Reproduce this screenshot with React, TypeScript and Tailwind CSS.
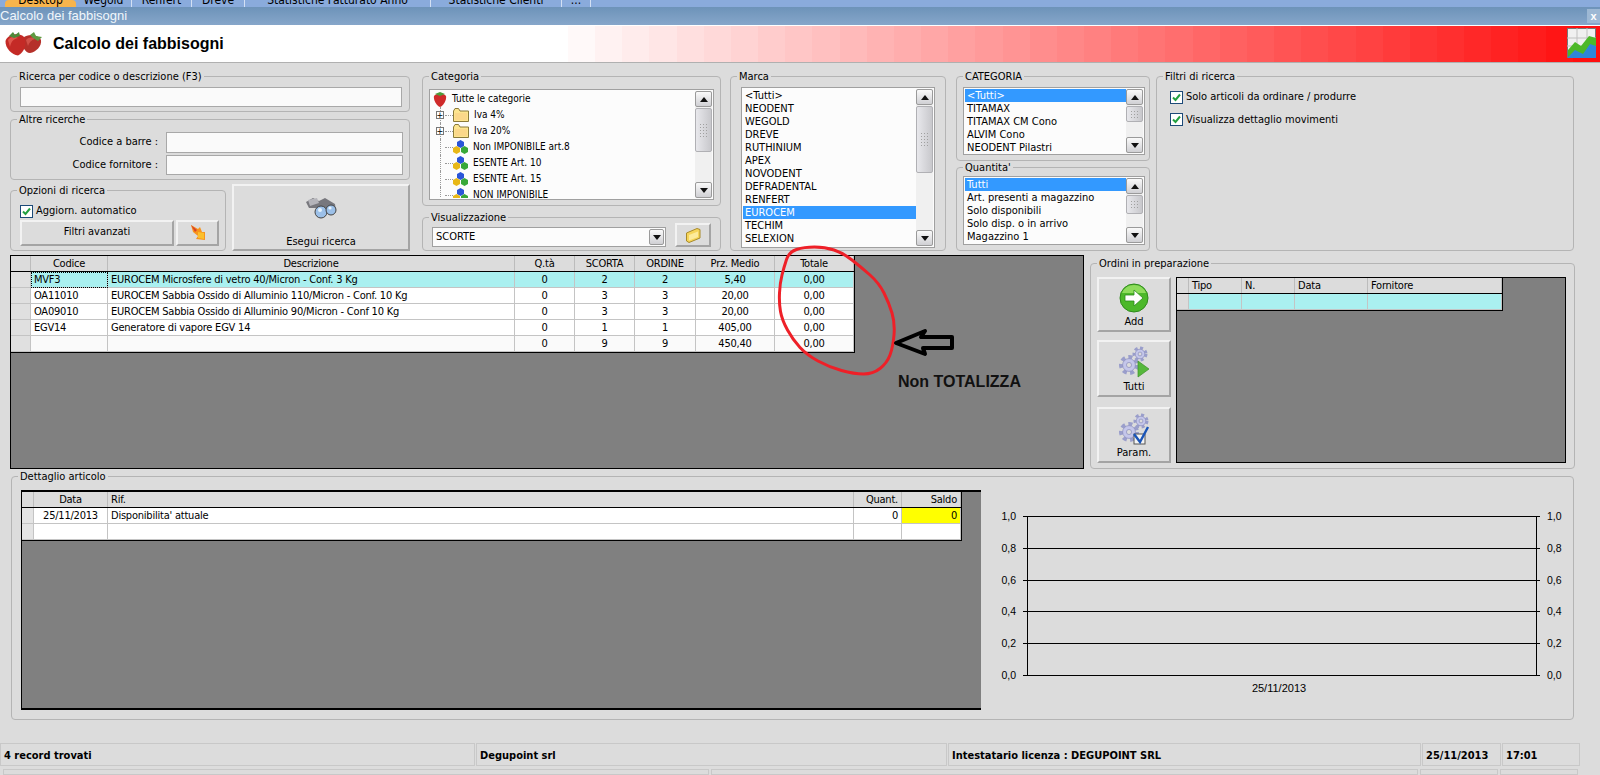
import type { ReactNode } from "react";

const raised = "border-2 border-t-[#f2f2f2] border-l-[#f2f2f2] border-b-[#a4a4a4] border-r-[#a4a4a4] bg-[#dcdcdc]";

const GroupBox = ({ title, className, children }: { title: string; className: string; children?: ReactNode }) => (
    <div className={`relative rounded-[4px] border border-[#b4b4b4] ${className}`}>
        <span className="absolute -top-[7px] left-[6px] bg-[#dcdcdc] px-[2px] text-[11px] leading-[14px] text-black whitespace-nowrap">{title}</span>
        {children}
    </div>
);

const Check = () => (
    <span className="flex h-[13px] w-[13px] shrink-0 items-center justify-center border border-[#1c4a78] bg-white">
        <svg width="9" height="9" viewBox="0 0 9 9">
            <path d="M1 4.5 L3.5 7 L8 1.5" fill="none" stroke="#22a040" strokeWidth="2" />
        </svg>
    </span>
);

const Triangle = ({ up }: { up?: boolean }) => (
    <svg width="8" height="5" viewBox="0 0 8 5">
        <path d={up ? "M4 0 L8 5 L0 5 Z" : "M0 0 L8 0 L4 5 Z"} fill="#111" />
    </svg>
);

const ScrollButton = ({ up }: { up?: boolean }) => (
    <div className="flex h-[16px] w-[17px] shrink-0 items-center justify-center rounded-[2px] border border-[#9a9a9a] bg-gradient-to-b from-[#fafafa] to-[#d0d0d4]">
        <Triangle up={up} />
    </div>
);

const ScrollBar = ({ thumb }: { thumb: number }) => (
    <div className="flex w-[17px] shrink-0 flex-col bg-[#f0f0f0]">
        <ScrollButton up />
        <div
            className="mt-[1px] flex w-[17px] shrink-0 items-center justify-center overflow-hidden rounded-[2px] border border-[#b0b0b4] bg-gradient-to-r from-[#e8e8ec] to-[#c8c8cc]"
            style={{ height: thumb }}
        >
            <div className="grid grid-cols-3 gap-[2px]">
                {Array.from({ length: thumb > 30 ? 15 : 9 }, (_, i) => (
                    <span key={i} className="h-[1px] w-[1px] bg-[#a0a0a0]" />
                ))}
            </div>
        </div>
        <div className="flex-1" />
        <ScrollButton />
    </div>
);

const ListBox = ({ items, selected, thumb, className }: { items: string[]; selected: number; thumb: number; className: string }) => (
    <div className={`flex justify-between border border-[#a0a0a0] bg-[#fcfcfc] p-[1px] ${className}`}>
        <div className="min-w-0 flex-1 overflow-hidden">
            {items.map((item, i) => (
                <div key={item} className={`h-[13px] whitespace-nowrap pl-[2px] text-[11px] leading-[13px] ${i === selected ? "bg-[#3399ff] text-white" : "text-black"}`}>
                    {item}
                </div>
            ))}
        </div>
        <ScrollBar thumb={thumb} />
    </div>
);

const Berry = ({ size = 14 }: { size?: number }) => (
    <svg width={size} height={size + 2} viewBox="0 0 14 16">
        <path d="M1 5 C3 2 11 2 13 5 C14 9 10 15 7 16 C4 15 0 9 1 5 Z" fill="#cf2a2a" />
        <path d="M2 3 L7 1 L12 3 L7 5 Z" fill="#4c9a3a" />
    </svg>
);

const Strawberries = () => (
    <svg width="38" height="24" viewBox="0 0 38 24" className="shrink-0">
        <path d="M18 6 C24 1 33 3 36 8 C37 14 31 20 25 21 C20 21 16 14 18 6 Z" fill="#b5302a" />
        <path d="M0.5 9 C2 2 15 0 19 5 C22 11 20 20 13 23.5 C7 23 0 16 0.5 9 Z" fill="#c42a26" />
        <path d="M3 8 C6 4 10 4 13 6 C8 7 6 10 5 15 Z" fill="#e0564c" />
        <path d="M21 8 C24 5 28 5 30 7 C26 8 24 11 23 14 Z" fill="#d25048" />
        <path d="M4 4 L8 0 L10 3 L14 0 L15 4 L9 6 Z" fill="#4d8a3a" />
        <path d="M25 3 L29 0 L31 4 L37 5 L33 9 L28 6 Z" fill="#5f9a42" />
    </svg>
);

const Folder = () => (
    <svg width="16" height="14" viewBox="0 0 16 14" className="shrink-0">
        <path d="M0.5 3 L0.5 13.5 L15.5 13.5 L15.5 3 L7 3 L5.5 0.5 L2 0.5 Z" fill="#fde58e" stroke="#8a7a3a" />
        <path d="M2 5 H14 V12 H2 Z" fill="#fbd88a" />
    </svg>
);

const OpenFolder = () => (
    <svg width="15" height="15" viewBox="0 0 15 15" className="shrink-0">
        <path d="M0.5 5 L11 0.5 L14 1.5 L14 10 L3 14.5 L0.5 13 Z" fill="#f6d55a" stroke="#a88a2a" />
        <path d="M3 7 L12 3.5 V9 L3 12.5 Z" fill="#fdeb9c" />
    </svg>
);

const Cubes = () => (
    <svg width="15" height="14" viewBox="0 0 15 14" className="shrink-0">
        <path d="M4 2 L7.5 0 L11 2 V6 L7.5 8 L4 6 Z" fill="#2a55d8" />
        <path d="M0 8 L3.5 6 L7 8 V12 L3.5 14 L0 12 Z" fill="#e8b818" />
        <path d="M8 8 L11.5 6 L15 8 V12 L11.5 14 L8 12 Z" fill="#38a838" />
    </svg>
);

const treeRows: { label: string; folder?: boolean }[] = [
    { label: "Iva 4%", folder: true },
    { label: "Iva 20%", folder: true },
    { label: "Non IMPONIBILE art.8" },
    { label: "ESENTE Art. 10" },
    { label: "ESENTE Art. 15" },
    { label: "NON IMPONIBILE" },
];

const CategoryTree = () => (
    <div className="flex h-[111px] w-[285px] justify-between border border-[#a0a0a0] bg-[#fcfcfc] py-[1px] pr-[1px]">
        <div className="min-w-0 flex-1 overflow-hidden pl-[3px] text-[10px] leading-[16px] text-black">
            <div className="flex h-[16px] items-center gap-[5px]">
                <Berry />
                <span>Tutte le categorie</span>
            </div>
            {treeRows.map(row => (
                <div key={row.label} className="flex h-[16px] items-center">
                    <span className="relative flex h-[16px] w-[20px] shrink-0 items-center justify-end">
                        <span className="absolute left-[7px] top-0 h-[16px] border-l border-dotted border-[#999]" />
                        {row.folder && (
                            <span className="absolute left-[3px] top-[4px] flex h-[8px] w-[8px] items-center justify-center border border-[#777] bg-white text-[9px] leading-[6px]">+</span>
                        )}
                        <span className="w-[8px] border-t border-dotted border-[#999]" />
                    </span>
                    {row.folder ? <Folder /> : <Cubes />}
                    <span className="ml-[5px] whitespace-nowrap">{row.label}</span>
                </div>
            ))}
        </div>
        <ScrollBar thumb={44} />
    </div>
);

type Column = { label: string; width: number; head?: string; cell?: string };

const DataGrid = ({ columns, rows, rowClass, cellClass }: {
    columns: Column[];
    rows: string[][];
    rowClass?: (row: number) => string;
    cellClass?: (row: number, col: number) => string;
}) => (
    <div className="w-fit border-b border-r border-black text-[11px] leading-[15px] tracking-[-0.22px] text-black">
        <div className="flex h-[16px] border-b border-black bg-[#dcdcdc]">
            {columns.map((col, i) => (
                <div key={i} className={`h-[15px] shrink-0 truncate border-r border-[#bcbcbc] px-[3px] ${col.head ?? "text-center"}`} style={{ width: col.width }}>
                    {col.label}
                </div>
            ))}
        </div>
        {rows.map((row, r) => (
            <div key={r} className={`flex h-[16px] ${rowClass ? rowClass(r) : "bg-white"}`}>
                {row.map((text, c) => (
                    <div
                        key={c}
                        className={`h-[16px] shrink-0 truncate border-b border-r border-[#c4c4c4] px-[3px] ${columns[c].cell ?? ""} ${cellClass ? cellClass(r, c) : ""}`}
                        style={{ width: columns[c].width }}
                    >
                        {text}
                    </div>
                ))}
            </div>
        ))}
    </div>
);

const mainColumns: Column[] = [
    { label: "", width: 20 },
    { label: "Codice", width: 77 },
    { label: "Descrizione", width: 407 },
    { label: "Q.tà", width: 60, cell: "text-center" },
    { label: "SCORTA", width: 60, cell: "text-center" },
    { label: "ORDINE", width: 61, cell: "text-center" },
    { label: "Prz. Medio", width: 79, cell: "text-center" },
    { label: "Totale", width: 79, cell: "text-center" },
];

const mainRows = [
    ["", "MVF3", "EUROCEM Microsfere di vetro 40/Micron - Conf. 3 Kg", "0", "2", "2", "5,40", "0,00"],
    ["", "OA11010", "EUROCEM Sabbia Ossido di Alluminio 110/Micron - Conf. 10 Kg", "0", "3", "3", "20,00", "0,00"],
    ["", "OA09010", "EUROCEM Sabbia Ossido di Alluminio 90/Micron - Conf 10 Kg", "0", "3", "3", "20,00", "0,00"],
    ["", "EGV14", "Generatore di vapore EGV 14", "0", "1", "1", "405,00", "0,00"],
    ["", "", "", "0", "9", "9", "450,40", "0,00"],
];

const orderColumns: Column[] = [
    { label: "", width: 12 },
    { label: "Tipo", width: 53, head: "text-left" },
    { label: "N.", width: 53, head: "text-left" },
    { label: "Data", width: 73, head: "text-left" },
    { label: "Fornitore", width: 134, head: "text-left" },
];

const detailColumns: Column[] = [
    { label: "", width: 12 },
    { label: "Data", width: 74, cell: "text-center" },
    { label: "Rif.", width: 746, head: "text-left" },
    { label: "Quant.", width: 48, head: "text-right", cell: "text-right" },
    { label: "Saldo", width: 59, head: "text-right", cell: "text-right" },
];

const Gear = ({ x, y, r }: { x: number; y: number; r: number }) => (
    <g>
        <circle cx={x} cy={y} r={r} fill="none" stroke="#9a9ecb" strokeWidth={r * 0.5} strokeDasharray={`${r * 0.5} ${r * 0.42}`} />
        <circle cx={x} cy={y} r={r * 0.8} fill="#c4c6ea" stroke="#8a8dbc" strokeWidth="0.7" />
        <circle cx={x} cy={y} r={r * 0.32} fill="#dcdcdc" stroke="#8a8dbc" strokeWidth="0.7" />
    </g>
);

const AddIcon = () => (
    <svg width="30" height="30" viewBox="0 0 30 30">
        <circle cx="15" cy="15" r="14" fill="#4cb82a" stroke="#2f8a1c" />
        <path d="M3 10 A13 13 0 0 1 27 10 Z" fill="#8edc5c" />
        <path d="M6 12 H15 V7 L24 15 L15 23 V18 H6 Z" fill="#fff" stroke="#2c8a1c" strokeWidth="0.8" />
    </svg>
);

const GearPlayIcon = () => (
    <svg width="32" height="32" viewBox="0 0 32 32">
        <Gear x={22} y={8} r={6} />
        <Gear x={11} y={19} r={8} />
        <path d="M20 15 L31 23 L20 31 Z" fill="#56b83c" stroke="#3d8f2a" strokeWidth="0.7" />
    </svg>
);

const GearCheckIcon = () => (
    <svg width="32" height="32" viewBox="0 0 32 32">
        <Gear x={23} y={8} r={6} />
        <Gear x={11} y={19} r={8} />
        <rect x="16" y="21" width="11" height="10" fill="#f4f4f4" stroke="#555" />
        <path d="M16 21 L22 29 L30 14" fill="none" stroke="#1a55b8" strokeWidth="2.4" />
    </svg>
);

const SideButton = ({ label, className, children }: { label: string; className: string; children: ReactNode }) => (
    <div className={`flex w-[74px] flex-col items-center justify-between pb-[1px] pt-[4px] text-[11px] leading-[14px] text-black ${raised} ${className}`}>
        {children}
        <span>{label}</span>
    </div>
);

const Binoculars = () => (
    <svg width="32" height="22" viewBox="0 0 32 22">
        <path d="M1 5 L8 1 L14 4 L20 1 L30 7 L31 14 L25 11 L17 11 L10 11 L4 11 Z" fill="#77777d" />
        <path d="M3 3 L12 1 L14 6 L5 9 Z" fill="#b4b4ba" />
        <circle cx="16" cy="15" r="6" fill="#9cc0e8" stroke="#444" />
        <circle cx="26" cy="13" r="5" fill="#9cc0e8" stroke="#444" />
        <circle cx="15" cy="13" r="2" fill="#e6f2fc" />
        <circle cx="25" cy="11" r="1.6" fill="#e6f2fc" />
    </svg>
);

const FlameArrow = () => (
    <svg width="16" height="16" viewBox="0 0 16 16">
        <path d="M1 0 L8 4 L10 2 L12 7 L15 7 L15 15 L6 14 L8 11 L3 7 Z" fill="#f7941d" />
        <path d="M1 0 L7 5 L5 7 Z" fill="#d8402a" />
        <path d="M8 7 L14 8 L14 14 L8 13 Z" fill="#fbc02d" />
    </svg>
);

const ChartIcon = () => (
    <svg width="30" height="31" viewBox="0 0 30 31" className="shrink-0">
        <rect x="0.5" y="0.5" width="28" height="29" fill="#f0f0f0" stroke="#777" />
        <path d="M0 10 H29 M0 18 H29 M10 0 V30 M20 0 V30" stroke="#c0c0c0" />
        <path d="M1 22 L8 14 L14 18 L22 8 L29 10 V30 H1 Z" fill="#4cb828" />
        <path d="M1 29 L8 22 L16 26 L23 16 L29 18 V30 H1 Z" fill="#2f86d8" />
    </svg>
);

// bande del gradiente nell'intestazione
const bands = Array.from({ length: 38 }, (_, i) => {
    const t = (i + 1) / 38;
    const c = Math.round(255 - t * 240);
    return `rgb(255,${c},${c})`;
});

const smooth = (pts: number[][]) => {
    let d = "";
    pts.forEach((p, i) => {
        const next = pts[(i + 1) % pts.length];
        const mid = [(p[0] + next[0]) / 2, (p[1] + next[1]) / 2];
        d += i === 0 ? `M${mid[0]} ${mid[1]} ` : `Q${p[0]} ${p[1]} ${mid[0]} ${mid[1]} `;
    });
    const first = pts[0];
    const second = pts[1];
    return d + `Q${first[0]} ${first[1]} ${(first[0] + second[0]) / 2} ${(first[1] + second[1]) / 2}`;
};

const ring = [[789, 252], [804, 247], [825, 247], [843, 253], [861, 267], [879, 283], [889, 303], [895, 323], [893, 347], [887, 363], [873, 374], [854, 374], [829, 367], [807, 355], [793, 340], [782, 320], [779, 303], [780, 283], [784, 267]];

const tabs = [
    { label: "Wegold", width: 56 },
    { label: "Renfert", width: 60 },
    { label: "Dreve", width: 53 },
    { label: "Statistiche Fatturato Anno", width: 186 },
    { label: "Statistiche Clienti", width: 131 },
    { label: "...", width: 29 },
];

const levels = ["1,0", "0,8", "0,6", "0,4", "0,2", "0,0"];
const levelY = [26, 58, 90, 121, 153, 185];

const StatusCell = ({ className, children }: { className: string; children?: ReactNode }) => (
    <div className={`shrink-0 truncate border border-[#c8c8c8] pl-[3px] font-bold ${className}`}>{children}</div>
);

export default function App() {
    return (
        <div className="relative flex h-[775px] w-[1600px] flex-col overflow-hidden bg-[#dcdcdc] font-['DejaVu_Sans_Condensed','Liberation_Sans',sans-serif] text-[11px] text-black">
            {/* Tabs, tagliate dal bordo */}
            <div className="flex h-[7px] shrink-0 overflow-hidden bg-[#8aabdc] pl-[5px] text-[12px] leading-[14px]">
                <div className="h-[7px] w-[71px] rounded-t bg-[#f8b44c] text-center">
                    <div className="-mt-[7px]">Desktop</div>
                </div>
                {tabs.map(tab => (
                    <div key={tab.label} className="h-[7px] shrink-0 border-r border-[#d4e0f4] text-center" style={{ width: tab.width }}>
                        <div className="-mt-[7px] whitespace-nowrap">{tab.label}</div>
                    </div>
                ))}
            </div>

            {/* Barra titolo */}
            <div className="flex h-[18px] shrink-0 items-center justify-between bg-gradient-to-b from-[#6d93b9] to-[#86a6ca] font-['Liberation_Sans',sans-serif] text-[13px] text-[#f0f6fb]">
                <span>Calcolo dei fabbisogni</span>
                <span className="flex h-[14px] w-[13px] items-center justify-center bg-[#9db8d4] text-[11px] font-bold text-white">x</span>
            </div>

            {/* Intestazione */}
            <div className="flex h-[38px] shrink-0 items-center border-y border-[#b0b0b0] border-t-white bg-white">
                <div className="ml-[5px]"><Strawberries /></div>
                <h1 className="ml-[10px] w-[515px] font-['Liberation_Sans',sans-serif] text-[16px] font-bold">Calcolo dei fabbisogni</h1>
                <div className="flex h-full flex-1 items-stretch">
                    {bands.map(color => (
                        <div key={color} className="flex-1" style={{ background: color }} />
                    ))}
                </div>
                <div className="absolute right-[3px] top-[28px]"><ChartIcon /></div>
            </div>

            {/* Filtri */}
            <div className="mt-[13px] flex h-[175px] shrink-0 pl-[10px]">
                <div className="w-[400px]">
                    <GroupBox title="Ricerca per codice o descrizione (F3)" className="h-[36px] px-[9px] pt-[10px]">
                        <div className="h-[20px] w-[382px] border border-[#a8a8a8] bg-[#fafafa]" />
                    </GroupBox>
                    <GroupBox title="Altre ricerche" className="mt-[7px] flex h-[61px] flex-col gap-[2px] pl-[2px] pt-[12px]">
                        <div className="flex items-center">
                            <span className="w-[145px] text-right">Codice a barre :</span>
                            <div className="ml-[8px] h-[21px] w-[237px] border border-[#a8a8a8] bg-[#fafafa]" />
                        </div>
                        <div className="flex items-center">
                            <span className="w-[145px] text-right">Codice fornitore :</span>
                            <div className="ml-[8px] h-[20px] w-[237px] border border-[#a8a8a8] bg-[#fafafa]" />
                        </div>
                    </GroupBox>
                    <div className="mt-[4px] flex h-[67px] items-end justify-between">
                        <GroupBox title="Opzioni di ricerca" className="h-[61px] w-[216px] pl-[9px] pt-[12px]">
                            <div className="flex items-center gap-[3px]">
                                <Check />
                                <span>Aggiorn. automatico</span>
                            </div>
                            <div className="flex gap-[2px]">
                                <div className={`flex h-[26px] w-[154px] items-center justify-center ${raised}`}>Filtri avanzati</div>
                                <div className={`flex h-[26px] w-[43px] items-center justify-center ${raised}`}><FlameArrow /></div>
                            </div>
                        </GroupBox>
                        <div className={`flex h-[67px] w-[178px] flex-col items-center justify-between pt-[11px] leading-[14px] ${raised}`}>
                            <Binoculars />
                            <span>Esegui ricerca</span>
                        </div>
                    </div>
                </div>

                <div className="ml-[12px] w-[299px]">
                    <GroupBox title="Categoria" className="h-[130px] pl-[6px] pt-[12px]">
                        <CategoryTree />
                    </GroupBox>
                    <GroupBox title="Visualizzazione" className="mt-[11px] flex h-[34px] items-start pl-[9px] pt-[9px]">
                        <div className="flex h-[20px] w-[234px] items-center justify-between border border-[#a0a0a0] bg-[#fcfcfc] pl-[3px] pr-[1px] text-[11px]">
                            <span>SCORTE</span>
                            <div className="flex h-[16px] w-[15px] items-center justify-center rounded-[2px] border border-[#9a9a9a] bg-gradient-to-b from-[#fafafa] to-[#d0d0d4]"><Triangle /></div>
                        </div>
                        <div className={`ml-[9px] -mt-[4px] flex h-[24px] w-[36px] items-center justify-center ${raised}`}><OpenFolder /></div>
                    </GroupBox>
                </div>

                <GroupBox title="Marca" className="ml-[9px] h-[175px] w-[216px] pl-[10px] pt-[10px]">
                    <ListBox
                        className="h-[161px] w-[194px]"
                        selected={9}
                        thumb={67}
                        items={["<Tutti>", "NEODENT", "WEGOLD", "DREVE", "RUTHINIUM", "APEX", "NOVODENT", "DEFRADENTAL", "RENFERT", "EUROCEM", "TECHIM", "SELEXION"]}
                    />
                </GroupBox>

                <div className="ml-[10px] w-[194px]">
                    <GroupBox title="CATEGORIA" className="h-[85px] pl-[6px] pt-[10px]">
                        <ListBox
                            className="h-[68px] w-[182px]"
                            selected={0}
                            thumb={16}
                            items={["<Tutti>", "TITAMAX", "TITAMAX CM Cono", "ALVIM Cono", "NEODENT Pilastri"]}
                        />
                    </GroupBox>
                    <GroupBox title="Quantita'" className="mt-[6px] h-[84px] pl-[6px] pt-[8px]">
                        <ListBox
                            className="h-[69px] w-[182px]"
                            selected={0}
                            thumb={19}
                            items={["Tutti", "Art. presenti a magazzino", "Solo disponibili", "Solo disp. o in arrivo", "Magazzino 1"]}
                        />
                    </GroupBox>
                </div>

                <GroupBox title="Filtri di ricerca" className="ml-[6px] flex h-[175px] w-[418px] flex-col gap-[6px] pl-[13px] pt-[12px]">
                    <div className="flex items-center gap-[3px]">
                        <Check />
                        <span>Solo articoli da ordinare / produrre</span>
                    </div>
                    <div className="flex items-center gap-[3px]">
                        <Check />
                        <span>Visualizza dettaglio movimenti</span>
                    </div>
                </GroupBox>
            </div>

            {/* Griglia principale e ordini */}
            <div className="mt-[4px] flex h-[214px] shrink-0 pl-[10px]">
                <div className="h-[214px] w-[1074px] border border-black bg-[#808080]">
                    <DataGrid
                        columns={mainColumns}
                        rows={mainRows}
                        rowClass={r => (r === 0 ? "bg-[#aaf0f0]" : r === 4 ? "bg-[#fafafa]" : "bg-white")}
                        cellClass={(r, c) => {
                            if (c === 0) return "bg-[#e0e0e0]";
                            if (r === 0 && c === 1) return "outline-1 -outline-offset-1 outline-dotted outline-black";
                            return "";
                        }}
                    />
                </div>
                <GroupBox title="Ordini in preparazione" className="ml-[6px] mt-[8px] flex h-[206px] w-[485px] pl-[6px] pt-[13px]">
                    <div className="flex flex-col">
                        <SideButton label="Add" className="h-[55px]"><AddIcon /></SideButton>
                        <SideButton label="Tutti" className="mt-[8px] h-[57px]"><GearPlayIcon /></SideButton>
                        <SideButton label="Param." className="mt-[10px] h-[56px]"><GearCheckIcon /></SideButton>
                    </div>
                    <div className="ml-[5px] h-[186px] w-[390px] border border-black bg-[#808080]">
                        <DataGrid
                            columns={orderColumns}
                            rows={[["", "", "", "", ""]]}
                            rowClass={() => "bg-[#aaf0f0]"}
                            cellClass={(_, c) => (c === 0 ? "bg-[#dcdcdc]" : "")}
                        />
                    </div>
                </GroupBox>
            </div>

            {/* Dettaglio articolo */}
            <GroupBox title="Dettaglio articolo" className="ml-[11px] mt-[7px] flex h-[244px] w-[1563px] shrink-0 pl-[9px] pt-[13px]">
                <div className="h-[220px] w-[960px] shrink-0 border-y-2 border-l border-black bg-[#808080]">
                    <DataGrid
                        columns={detailColumns}
                        rows={[
                            ["", "25/11/2013", "Disponibilita' attuale", "0", "0"],
                            ["", "", "", "", ""],
                        ]}
                        cellClass={(r, c) => (c === 0 ? "bg-[#e4e4e4]" : r === 0 && c === 4 ? "bg-[#ffff00]" : "")}
                    />
                </div>
                <svg width="585" height="220" viewBox="0 0 585 220" className="ml-[5px] shrink-0 font-['Liberation_Sans',sans-serif]">
                    {levelY.map((y, i) => (
                        <g key={y}>
                            <path d={`M37 ${y} H554`} stroke="#000" strokeWidth="1" shapeRendering="crispEdges" />
                            <text x="30" y={y + 4} fontSize="10.5" textAnchor="end" fill="#000">{levels[i]}</text>
                            <text x="561" y={y + 4} fontSize="10.5" fill="#000">{levels[i]}</text>
                        </g>
                    ))}
                    <path d="M41 26 V185 M550 26 V185" stroke="#000" shapeRendering="crispEdges" />
                    <text x="293" y="202" fontSize="11" textAnchor="middle" fill="#000">25/11/2013</text>
                </svg>
            </GroupBox>

            {/* Barra di stato */}
            <div className="mt-[23px] flex h-[23px] shrink-0 gap-[1px] leading-[23px]">
                <StatusCell className="w-[475px]">4 record trovati</StatusCell>
                <StatusCell className="w-[471px]">Degupoint srl</StatusCell>
                <StatusCell className="w-[473px]">Intestatario licenza : DEGUPOINT SRL</StatusCell>
                <StatusCell className="w-[79px]">25/11/2013</StatusCell>
                <StatusCell className="w-[78px]">17:01</StatusCell>
            </div>
            <div className="mt-[3px] flex h-[6px] shrink-0 gap-[2px] pl-[3px]">
                <StatusCell className="w-[706px]" />
                <StatusCell className="w-[707px]" />
                <StatusCell className="w-[78px]" />
                <StatusCell className="w-[78px]" />
            </div>

            {/* Annotazioni sopra la griglia */}
            <svg width="1600" height="775" className="pointer-events-none absolute left-0 top-0">
                <path d={smooth(ring)} fill="none" stroke="#ee2028" strokeWidth="3" />
                <path d="M896 343 L925 331 L921 337 H952 V348 H923 L925 354 Z" fill="none" stroke="#000" strokeWidth="4" strokeLinejoin="round" />
            </svg>
            <span className="absolute left-[898px] top-[373px] font-['Liberation_Sans',sans-serif] text-[16px] font-bold leading-[18px] text-[#111]">Non TOTALIZZA</span>
        </div>
    );
}
